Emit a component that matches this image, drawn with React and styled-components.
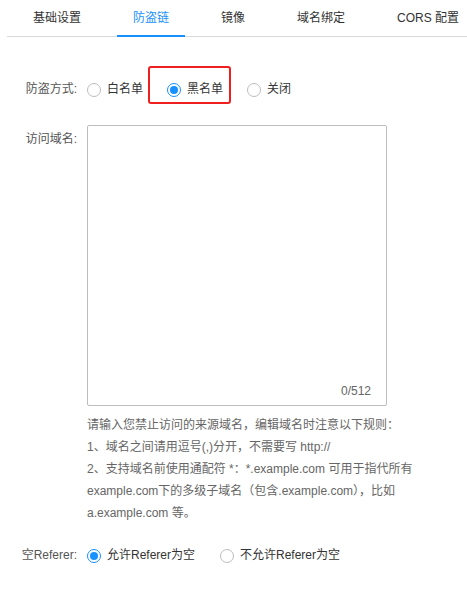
import React, { useState } from "react";
import styled, { createGlobalStyle } from "styled-components";

const GlobalStyle = createGlobalStyle`
  body {
    margin: 0;
    background: #fff;
    font-family: "Liberation Sans", "Noto Sans CJK SC", sans-serif;
    font-size: 12px;
    color: #333;
  }
`;

const Page = styled.div`
  width: 467px;
  height: 590px;
  overflow: hidden;
`;

const TabBar = styled.div`
  display: flex;
  gap: 20px;
  margin-left: 7px;
  padding-left: 10px;
  height: 36px;
  border-bottom: 1px solid #d9d9d9;
`;

const Tab = styled.div`
  position: relative;
  padding: 0 16px;
  height: 36px;
  line-height: 37px;
  white-space: nowrap;
  font-size: 12px;
  color: ${p => (p.active ? "#1890ff" : "#333")};
  &::after {
    content: "";
    position: absolute;
    left: 0;
    right: 0;
    bottom: -1px;
    height: 2px;
    background: ${p => (p.active ? "#1890ff" : "transparent")};
  }
`;

const Form = styled.div`
  display: flex;
  flex-direction: column;
  padding-top: 44px;
  line-height: 17px;
`;

const Row = styled.div`
  display: flex;
  align-items: ${p => (p.top ? "flex-start" : "center")};
  margin-bottom: ${p => p.mb || 0}px;
`;

const Label = styled.div`
  width: 77px;
  text-align: right;
  padding-right: 10px;
  color: #555;
  white-space: nowrap;
  padding-top: ${p => p.pt || 0}px;
  box-sizing: content-box;
`;

const RadioGroup = styled.div`
  display: flex;
  align-items: center;
`;

const RadioItem = styled.label`
  position: relative;
  display: flex;
  align-items: center;
  gap: 6px;
  height: 17px;
  margin-right: ${p => p.gap || 24}px;
  color: #333;
  cursor: pointer;
  white-space: nowrap;
`;

const Circle = styled.span`
  width: 14px;
  height: 14px;
  box-sizing: border-box;
  border-radius: 50%;
  border: 1px solid ${p => (p.checked ? "#1890ff" : "#bcbcbc")};
  display: flex;
  align-items: center;
  justify-content: center;
  &::after {
    content: "";
    width: 8px;
    height: 8px;
    border-radius: 50%;
    background: ${p => (p.checked ? "#1890ff" : "transparent")};
  }
`;

const Highlight = styled.span`
  position: absolute;
  left: -19px;
  right: -8px;
  top: -15px;
  bottom: -6px;
  border: 2px solid #f01f1f;
  border-radius: 3px;
  pointer-events: none;
`;

const Field = styled.div`
  display: flex;
  flex-direction: column;
`;

const AreaWrap = styled.div`
  position: relative;
  width: 300px;
  height: 281px;
  box-sizing: border-box;
  border: 1px solid #bdbdbd;
  border-radius: 2px;
`;

const Area = styled.textarea`
  width: 100%;
  height: 100%;
  border: none;
  outline: none;
  resize: none;
  box-sizing: border-box;
  padding: 6px 8px;
  font: inherit;
  background: transparent;
`;

const Counter = styled.span`
  position: absolute;
  right: 15px;
  bottom: 5px;
  color: #666;
  font-size: 12px;
`;

const Help = styled.div`
  margin-top: 8px;
  color: #666;
  line-height: 22px;
  font-size: 12px;
  white-space: nowrap;
`;

const HelpLine = styled.div``;

const Radio = ({ checked, children, gap, onClick, highlight }) => (
  <RadioItem gap={gap} onClick={onClick}>
    {highlight && <Highlight />}
    <Circle checked={checked} />
    {children}
  </RadioItem>
);

const tabs = ["基础设置", "防盗链", "镜像", "域名绑定", "CORS 配置"];

const helpLines = [
  "请输入您禁止访问的来源域名，编辑域名时注意以下规则：",
  "1、域名之间请用逗号(,)分开，不需要写 http://",
  "2、支持域名前使用通配符 *：*.example.com 可用于指代所有",
  "example.com下的多级子域名（包含.example.com），比如",
  "a.example.com 等。"
];

export default function App() {
  const [mode, setMode] = useState("black");
  const [referer, setReferer] = useState(true);
  const [text, setText] = useState("");

  return (
    <Page>
      <GlobalStyle />
      <TabBar>
        {tabs.map(t => (
          <Tab key={t} active={t === "防盗链"}>
            {t}
          </Tab>
        ))}
      </TabBar>
      <Form>
        <Row mb={27}>
          <Label>防盗方式:</Label>
          <RadioGroup>
            <Radio checked={mode === "white"} onClick={() => setMode("white")}>
              白名单
            </Radio>
            <Radio
              checked={mode === "black"}
              highlight
              onClick={() => setMode("black")}
            >
              黑名单
            </Radio>
            <Radio checked={mode === "off"} onClick={() => setMode("off")}>
              关闭
            </Radio>
          </RadioGroup>
        </Row>
        <Row top mb={23}>
          <Label pt={6}>访问域名:</Label>
          <Field>
            <AreaWrap>
              <Area
                value={text}
                maxLength={512}
                onChange={e => setText(e.target.value)}
              />
              <Counter>{text.length}/512</Counter>
            </AreaWrap>
            <Help>
              {helpLines.map(l => (
                <HelpLine key={l}>{l}</HelpLine>
              ))}
            </Help>
          </Field>
        </Row>
        <Row>
          <Label>空Referer:</Label>
          <RadioGroup>
            <Radio checked={referer} gap={25} onClick={() => setReferer(true)}>
              允许Referer为空
            </Radio>
            <Radio checked={!referer} onClick={() => setReferer(false)}>
              不允许Referer为空
            </Radio>
          </RadioGroup>
        </Row>
      </Form>
    </Page>
  );
}
